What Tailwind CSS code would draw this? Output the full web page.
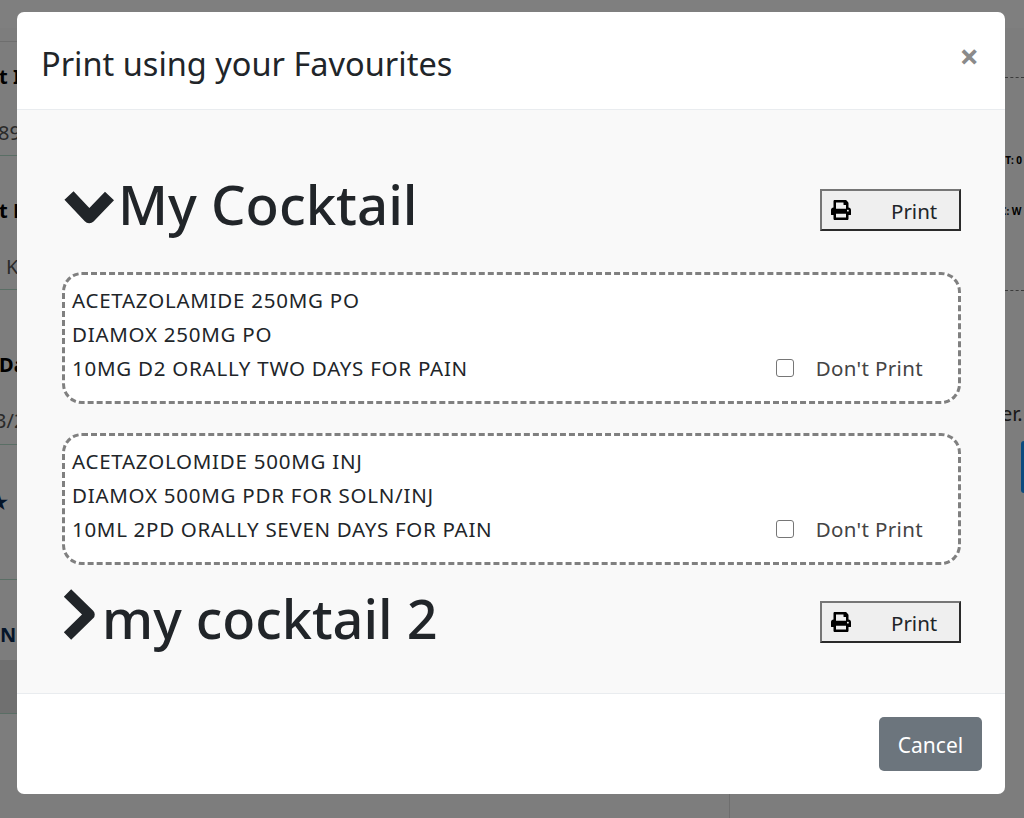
<!DOCTYPE html>
<html lang="en">
<head>
    <meta charset="UTF-8">
    <meta name="viewport" content="width=device-width, initial-scale=1.0">
    <title>Print using your Favourites</title>
    <script src="https://cdn.jsdelivr.net/npm/@tailwindcss/browser@4"></script>
</head>
<body class="h-[818px] overflow-hidden bg-white font-['Noto_Sans',sans-serif] text-[#212529]">
    <!-- Page behind the modal -->
    <div class="relative h-[818px] overflow-hidden">
        <div class="h-[28px] bg-white"></div>
        <div class="flex h-[790px] bg-[#fafafa]">
            <!-- left column, mostly hidden -->
            <div class="w-[730px] shrink-0 border-r border-[#dddddd] text-[20px]">
                <div class="h-[14px] border-b border-[#dddddd]"></div>
                <div class="h-[114px] border-b border-[#b5dccb] pt-[20px]">
                    <p class="ml-[-1px] font-bold text-black">t ID</p>
                    <p class="ml-[-2px] mt-[26px] text-[#555555]">89</p>
                </div>
                <div class="h-[134px] border-b border-[#b5dccb] pt-[40px]">
                    <p class="ml-[-1px] font-bold text-black">t N</p>
                    <p class="ml-[6px] mt-[26px] text-[#555555]">K</p>
                </div>
                <div class="h-[155px] border-b border-[#b5dccb] pt-[60px]">
                    <p class="ml-[-1px] font-bold text-black">Da</p>
                    <p class="ml-[-5px] mt-[26px] text-[#555555]">3/2</p>
                </div>
                <div class="h-[135px] border-b border-[#b5dccb] pt-[42px]">
                    <p class="ml-[-10px] font-bold text-[#0b2a52]">★</p>
                </div>
                <div class="h-[80px] pt-[40px]">
                    <p class="font-bold text-[#0b2a52]">N</p>
                </div>
                <div class="h-[54px] border-b border-[#b5dccb] bg-[#e0e0e0]"></div>
            </div>
            <!-- right column, only the edge shows -->
            <div class="flex-1 pl-[275px] text-[10px] font-bold text-black">
                <div class="h-[50px] border-b border-dashed border-[#777777]"></div>
                <p class="ml-[-8px] mt-[75px]">NT: 0</p>
                <p class="ml-[-5px] mt-[36px]">C: W</p>
                <div class="mt-[71px] border-b border-dashed border-[#777777]"></div>
                <p class="ml-[-4px] mt-[108px] text-[20px] font-normal text-[#333333]">er.</p>
                <div class="ml-[16px] mt-[12px] h-[52px] rounded-l bg-[#1696ff]"></div>
            </div>
        </div>

        <!-- Backdrop -->
        <div class="absolute inset-0 bg-black/50"></div>

        <!-- Modal -->
        <div class="absolute left-[17px] top-[12px] flex h-[782px] w-[988px] flex-col overflow-hidden rounded-[7px] bg-white">
            <div class="flex h-[98px] shrink-0 items-start justify-between border-b border-[#e9ecef] px-[24px]">
                <h3 class="mt-[28px] text-[32.5px] leading-[48px]">Print using your Favourites</h3>
                <span class="mt-[23px] mr-[2px] text-[34px] font-bold leading-[42px] text-[#8a8a8a]">×</span>
            </div>

            <div class="flex-1 bg-[#f9f9f9] pl-[45px] pr-[44px]">
                <div class="mt-[57px] flex items-center justify-between">
                    <h1 class="flex items-center text-[54.5px] font-medium leading-[72px]">
                        <svg class="h-[72px] w-[56px] shrink-0" viewBox="0 0 56 72"><polyline points="7,28.5 27.3,50 47.5,29" fill="none" stroke="#212529" stroke-width="12.5" stroke-linejoin="round"/></svg>
                        <span class="translate-y-[1px]">My Cocktail</span>
                    </h1>
                    <button class="mt-[14px] flex h-[42px] w-[141px] items-center border-[2px] border-t-[#767676] border-l-[#767676] border-r-[#2b2b2b] border-b-[#2b2b2b] bg-[#efefef] pl-[9px] text-[20.5px] leading-none">
                        <svg class="h-[20px] w-[20px] fill-black" viewBox="0 0 512 512"><path d="M448 192V77.25c0-8.49-3.37-16.62-9.37-22.63L393.37 9.37c-6-6-14.14-9.37-22.63-9.37H96C78.33 0 64 14.33 64 32v160c-35.35 0-64 28.65-64 64v112c0 8.84 7.16 16 16 16h48v96c0 17.67 14.33 32 32 32h320c17.67 0 32-14.33 32-32v-96h48c8.84 0 16-7.16 16-16V256c0-35.35-28.65-64-64-64zm-64 256H128v-96h256v96zm0-224H128V64h192v48c0 8.84 7.16 16 16 16h48v96zm48 72c-13.25 0-24-10.75-24-24 0-13.26 10.75-24 24-24s24 10.74 24 24c0 13.25-10.75 24-24 24z"/></svg>
                        <span class="ml-[40px] translate-y-[1px]">Print</span>
                    </button>
                </div>

                <div class="mt-[33px] h-[132px] rounded-[20px] border-[3px] border-dashed border-[#808080] bg-white pl-[7px] pr-[35px] pt-[8px] text-[20.5px] leading-[34px]">
                    <p class="tracking-[0.75px]">ACETAZOLAMIDE 250MG PO</p>
                    <p class="tracking-[0.75px]">DIAMOX 250MG PO</p>
                    <div class="flex items-center justify-between">
                        <p class="tracking-[0.75px]">10MG D2 ORALLY TWO DAYS FOR PAIN</p>
                        <label class="flex items-center">
                            <span class="h-[18px] w-[18px] rounded-[3px] border border-[#767676] bg-white"></span>
                            <span class="ml-[22px] tracking-[0.35px] text-[#444444]">Don't Print</span>
                        </label>
                    </div>
                </div>

                <div class="mt-[29px] h-[132px] rounded-[20px] border-[3px] border-dashed border-[#808080] bg-white pl-[7px] pr-[35px] pt-[8px] text-[20.5px] leading-[34px]">
                    <p class="tracking-[0.75px]">ACETAZOLOMIDE 500MG INJ</p>
                    <p class="tracking-[0.75px]">DIAMOX 500MG PDR FOR SOLN/INJ</p>
                    <div class="flex items-center justify-between">
                        <p class="tracking-[0.7px]">10ML 2PD ORALLY SEVEN DAYS FOR PAIN</p>
                        <label class="flex items-center">
                            <span class="h-[18px] w-[18px] rounded-[3px] border border-[#767676] bg-white"></span>
                            <span class="ml-[22px] tracking-[0.35px] text-[#444444]">Don't Print</span>
                        </label>
                    </div>
                </div>

                <div class="mt-[14px] flex items-center justify-between">
                    <h1 class="flex items-center text-[54.5px] font-medium leading-[72px]">
                        <svg class="h-[72px] w-[40px] shrink-0" viewBox="0 0 40 72"><polyline points="5.5,14 27.5,35.5 5.5,57" fill="none" stroke="#212529" stroke-width="10.5" stroke-linejoin="round"/></svg>
                        <span class="translate-y-[3px] text-[54px]">my cocktail 2</span>
                    </h1>
                    <button class="mt-[14px] flex h-[42px] w-[141px] items-center border-[2px] border-t-[#767676] border-l-[#767676] border-r-[#2b2b2b] border-b-[#2b2b2b] bg-[#efefef] pl-[9px] text-[20.5px] leading-none">
                        <svg class="h-[20px] w-[20px] fill-black" viewBox="0 0 512 512"><path d="M448 192V77.25c0-8.49-3.37-16.62-9.37-22.63L393.37 9.37c-6-6-14.14-9.37-22.63-9.37H96C78.33 0 64 14.33 64 32v160c-35.35 0-64 28.65-64 64v112c0 8.84 7.16 16 16 16h48v96c0 17.67 14.33 32 32 32h320c17.67 0 32-14.33 32-32v-96h48c8.84 0 16-7.16 16-16V256c0-35.35-28.65-64-64-64zm-64 256H128v-96h256v96zm0-224H128V64h192v48c0 8.84 7.16 16 16 16h48v96zm48 72c-13.25 0-24-10.75-24-24 0-13.26 10.75-24 24-24s24 10.74 24 24c0 13.25-10.75 24-24 24z"/></svg>
                        <span class="ml-[40px] translate-y-[1px]">Print</span>
                    </button>
                </div>
            </div>

            <div class="flex h-[101px] shrink-0 items-start justify-end border-t border-[#e9ecef] pr-[23px] pt-[23px]">
                <button class="h-[54px] w-[103px] rounded-[5px] bg-[#6c757d] pt-[3px] text-[21px] text-white">Cancel</button>
            </div>
        </div>
    </div>
</body>
</html>
